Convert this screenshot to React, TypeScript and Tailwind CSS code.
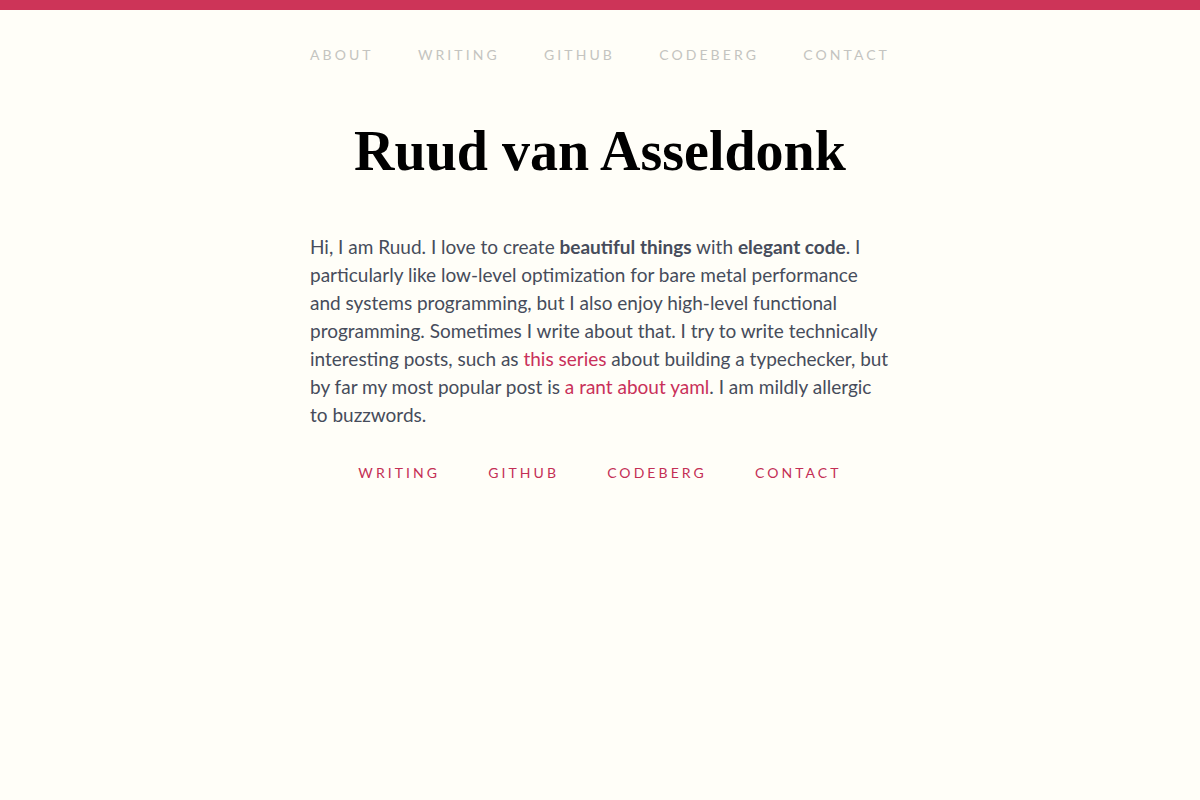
import React from 'react';

const topNav = ['About', 'Writing', 'GitHub', 'Codeberg', 'Contact'];
const bottomNav = ['Writing', 'GitHub', 'Codeberg', 'Contact'];

const App: React.FC = () => {
  return (
    <div className="min-h-screen bg-[#fffef8]" style={{ fontFamily: 'Lato, "Open Sans", sans-serif' }}>
      <div className="h-[10px] bg-[#cd3458]" />
      <div className="mx-auto w-[580px]">
        <nav className="flex justify-between pt-[25px] text-[14px] leading-[40px] tracking-[0.22em] uppercase text-[#c4c4c0]">
          {topNav.map((item) => (
            <a key={item} href="#">{item}</a>
          ))}
        </nav>
        <h1
          className="mt-[41px] text-center text-[56px] leading-[70px] font-bold text-black"
          style={{ fontFamily: '"Liberation Serif", serif' }}
        >
          Ruud van Asseldonk
        </h1>
        <p className="mt-[47px] w-[600px] text-[19px] leading-[28px] text-[#464c5b]">
          Hi, I am Ruud. I love to create <strong className="font-bold">beautiful things</strong> with{' '}
          <strong className="font-bold">elegant code</strong>. I<br />
          particularly like low-level optimization for bare metal performance<br />
          and systems programming, but I also enjoy high-level functional<br />
          programming. Sometimes I write about that. I try to write technically<br />
          interesting posts, such as <a href="#" className="text-[#c9305a]">this series</a> about building a
          typechecker, but<br />
          by far my most popular post is <a href="#" className="text-[#c9305a]">a rant about yaml</a>. I am mildly
          allergic<br />
          to buzzwords.
        </p>
        <nav className="mt-[34px] flex justify-center gap-[48px] text-[14px] leading-[20px] tracking-[0.22em] uppercase text-[#c42f55]">
          {bottomNav.map((item) => (
            <a key={item} href="#">{item}</a>
          ))}
        </nav>
      </div>
    </div>
  );
};

export default App;
